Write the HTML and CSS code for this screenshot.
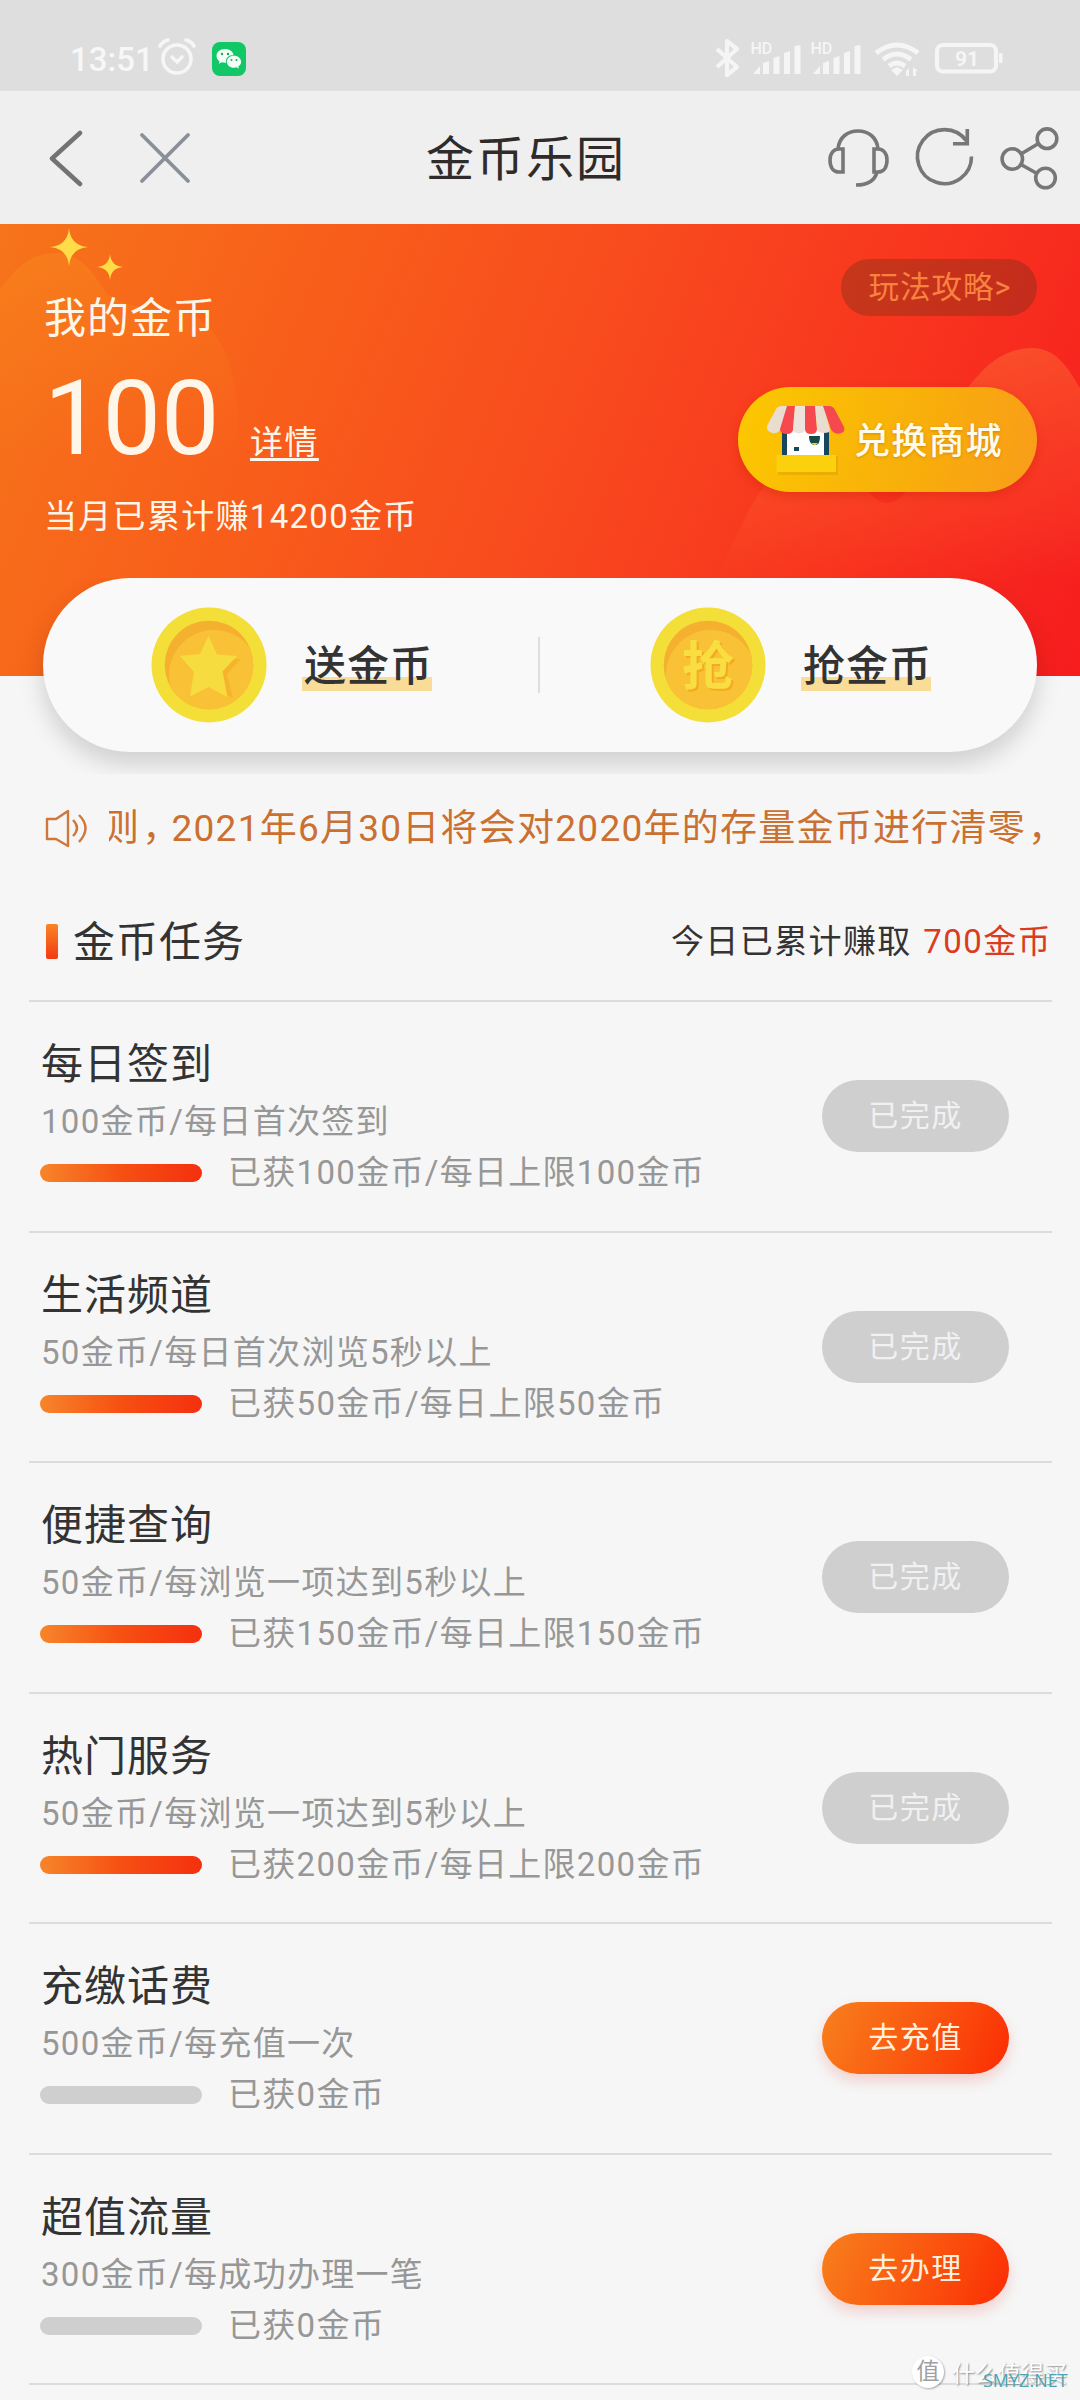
FILE: index.html
```html
<!DOCTYPE html>
<html lang="zh-CN">
<head>
<meta charset="utf-8">
<title>金币乐园</title>
<link rel="stylesheet" href="styles.css">
</head>
<body>
<div class="page">
  <div class="statusbar">
    <span class="clock">13:51</span>
    <svg class="alarm" width="40" height="40" viewBox="0 0 40 40" fill="none" stroke="#f6f6f6" stroke-width="3.6" stroke-linecap="round"><circle cx="20" cy="22" r="14"/><path d="M15 20l5 5 5-5M3 9q3-5 8-6M37 9q-3-5-8-6"/></svg>
    <svg class="wechat" width="34" height="34" viewBox="0 0 34 34"><rect width="34" height="34" rx="8" fill="#12c765"/><path fill="#f4fff8" d="M13 7c-5 0-8.500 3-8.500 7 0 2.300 1.200 4 3 5.300l-.8 2.500 3-1.500c1.500.4 2.800.5 4.300.4-.8-4.500 2.500-7.800 7.500-7.800C21 9.500 17.500 7 13 7z"/><path fill="#f4fff8" d="M22 13.700c-4.200 0-7.200 2.700-7.200 6s3 6 7.200 6c.8 0 1.700-.1 2.500-.4l2.400 1.400-.6-2.200c1.800-1.200 2.800-2.900 2.800-4.800 0-3.300-3-6-7.100-6z"/><g fill="#12a957"><circle cx="10" cy="12" r="1.200"/><circle cx="16" cy="12" r="1.200"/><circle cx="19.500" cy="18" r="1"/><circle cx="24.500" cy="18" r="1"/></g></svg>
    <svg class="signals" width="292" height="44" viewBox="714 38 292 44" fill="none" stroke="#f5f5f5" stroke-width="4.200">
      <path d="M717 50l20 18-10 8V42l10 8-20 18" stroke-linejoin="round"/>
      <g stroke="none" fill="#f5f5f5">
        <text class="hd" x="750.500" y="55">HD</text><text class="hd" x="810.500" y="55">HD</text>
        <path id="bars" d="M753 75l7-8v8zM763 64l6-2v13h-6zM773.500 59l6-2v18h-6zM784 54l6-2v23h-6zM794.500 47l6-1v29h-6z"/>
        <use href="#bars" x="60"/>
        <path d="M891 71l6-3 6 3-6 6z"/>
        <path d="M909 69v8h-3v-5zM913 77v-9l5 4h-2v5z"/>
        <rect x="999" y="54" width="3.500" height="10" rx="1"/>
        <text class="charge" x="955" y="67">91</text>
      </g>
      <path d="M876 54q21-16 42 0M883 60.500q14-11 28 0M889 67q8-6 16 0" stroke-width="5"/>
      <rect x="937" y="46" width="59" height="26.500" rx="6"/>
    </svg>
  </div>

  <header class="navbar">
    <svg class="back" width="36" height="58" viewBox="0 0 36 58" fill="none" stroke="#737373" stroke-width="4.500" stroke-linecap="round" stroke-linejoin="round"><path d="M32 4L4 29.500 32 55"/></svg>
    <svg class="close" width="52" height="52" viewBox="0 0 52 52" fill="none" stroke="#8a9098" stroke-width="3.800" stroke-linecap="round"><path d="M3 3l46 46M49 3L3 49"/></svg>
    <h1 class="title">金币乐园</h1>
    <svg class="tools" width="236" height="68" viewBox="826 123 236 68" fill="none" stroke="#777" stroke-width="3.600">
      <path d="M838 148c1-12 10-18 20-18s19 6 20 18M843 148v23h-4c-6 0-9-5-9-12s4-11 9-11zM874 148v23h4c6 0 9-5 9-12s-4-11-9-11zM877 171c-2 8-9 13-21 13"/>
      <path d="M971.500 155.500a27 27 0 1 1-5-15.500M967.300 128v14.800H953"/>
      <circle cx="1012.300" cy="158" r="10.200"/><circle cx="1047" cy="137.700" r="9.800"/><circle cx="1045.500" cy="177" r="9.800"/>
      <path d="M1021 153l17.500-10.500M1021 163.500l16 9"/>
    </svg>
  </header>

  <main>
    <section class="hero">
      <svg class="hero-art" width="1080" height="452" viewBox="0 224 1080 452">
        <defs>
          <linearGradient id="glow" x1="0" y1="0" x2="0" y2="1"><stop offset="0" stop-color="#ffb020" stop-opacity=".18"/><stop offset=".5" stop-color="#ffa020" stop-opacity="0"/></linearGradient>
          <linearGradient id="hill" x1="0" y1="0" x2="0" y2="1"><stop offset="0" stop-color="#ff9440" stop-opacity=".32"/><stop offset=".7" stop-color="#ff7838" stop-opacity=".16"/><stop offset="1" stop-color="#ff7838" stop-opacity="0"/></linearGradient>
        </defs>
        <path fill="url(#glow)" d="M0 290q24-37 54-37c26 0 38 17 52 40q20 16 60 16c45 0 72 45 72 116v249H0z"/>
        <path fill="url(#hill)" d="M716 580c25-50 50-130 105-130 34 0 42 53 66 53 42 0 64-155 145-155 28 0 40 28 48 40v192z"/>
        <g fill="#ffdc48"><path d="M69 228q1.500 17.500 19 19-17.500 1.500-19 19-1.500-17.500-19-19 17.500-1.500 19-19z"/><path d="M110 254q1 12 13 13-12 1-13 13-1-12-13-13 12-1 13-13z"/></g>
      </svg>
      <div class="balance">
        <p class="balance-label">我的金币</p>
        <p class="balance-line"><span class="balance-value">100</span><a class="detail">详情</a></p>
        <p class="balance-month">当月已累计赚14200金币</p>
      </div>
      <div class="hero-side">
        <a class="guide">玩法攻略&gt;</a>
        <a class="mall">
          <svg class="shop" width="84" height="72" viewBox="764 403 84 72">
            <path fill="#dca000" opacity=".5" d="M778 456h60v20h-60z"/>
            <path fill="#fff" d="M782 428h47v28h-47z"/><path fill="#164660" d="M782 430h5v26h-5zM824 430h5v26h-5zM794 447h5v4h-5z"/><path fill="#164b48" d="M809 436h11c0 7-2 9-5 9s-6-2-6-9z"/><path fill="#f5d020" d="M811 443h7l-3 2.500z"/>
            <path fill="#fbd00c" d="M776.600 455H836v17h-59.400z"/>
            <path fill="#e9ddd0" d="M776 409q2-3 6-3h6l-8 24q-3 4-8 3-6-2-5-7z"/>
            <path fill="#f5494f" d="M787 406h8l-2 24q-1 4-6 4-7 0-7-5z"/>
            <path fill="#eee3dc" d="M795 406h10v23q0 4-6 4.500-6-.5-6-4.500z"/>
            <path fill="#f5494f" d="M805 406h10l2 23q0 5-6 5-6 0-6-5z"/>
            <path fill="#e9ddd0" d="M815 406h9l6 24q0 3-6 3-6 0-7-4z"/>
            <path fill="#f5494f" d="M823 406h6q4 0 6 4l9 17q2 5-4 6.500-6 1-9-4z"/>
          </svg>
          <span>兑换商城</span>
        </a>
      </div>
    </section>

    <div class="actions-wrap">
      <div class="actions">
        <a class="action">
          <svg class="coin" width="116" height="116" viewBox="0 0 116 116"><defs><clipPath id="face"><circle cx="58" cy="58" r="44.300"/></clipPath></defs><circle cx="58" cy="58" r="57.500" fill="#f3df38"/><circle cx="58" cy="58" r="44.300" fill="#f5b030"/><circle cx="63" cy="68" r="45" fill="#f9c236" clip-path="url(#face)"/><path d="M76 52l14 0-14 15 6 24-9-4-15-9-16 8 14-22z" fill="#f5ae2a" opacity=".7"/><path fill="#f7dc40" d="M57.500 29l8.500 18.500 20 1.500-14.500 15.500 5 25.500-19-10-18.500 9.500 4-24.500-14-16 20-2z"/></svg>
          <span class="action-text">送金币</span>
        </a>
        <i class="split"></i>
        <a class="action">
          <svg class="coin" width="116" height="116" viewBox="0 0 116 116"><circle cx="58" cy="58" r="57.500" fill="#f3df38"/><circle cx="58" cy="58" r="44.300" fill="#f5b030"/><circle cx="61" cy="68" r="45" fill="#f9c236" clip-path="url(#face)"/><text class="coin-char coin-shade" x="34" y="80">抢</text><text class="coin-char" x="32" y="78">抢</text></svg>
          <span class="action-text">抢金币</span>
        </a>
      </div>
    </div>

    <div class="notice">
      <svg width="42" height="40" viewBox="0 0 42 40" fill="none" stroke="#d0783a" stroke-width="2.400" stroke-linejoin="round"><path d="M2 11h9L23 3v35l-12-7H2zM28 12q8 8 0 16M34 7q13 13 0 27"/></svg>
      <div class="ticker"><span class="ticker-text">则<span class="comma">，</span>2021年6月30日将会对2020年的存量金币进行清零<span class="comma">，</span></span></div>
    </div>

    <section class="tasks">
      <div class="tasks-head">
        <h2>金币任务</h2>
        <p>今日已累计赚取 <em>700金币</em></p>
      </div>
      <article class="task"><div class="info"><h3>每日签到</h3><p>100金币/每日首次签到</p><div class="progress"><i class="bar full"></i><span>已获100金币/每日上限100金币</span></div></div><a class="btn">已完成</a></article>
      <article class="task"><div class="info"><h3>生活频道</h3><p>50金币/每日首次浏览5秒以上</p><div class="progress"><i class="bar full"></i><span>已获50金币/每日上限50金币</span></div></div><a class="btn">已完成</a></article>
      <article class="task"><div class="info"><h3>便捷查询</h3><p>50金币/每浏览一项达到5秒以上</p><div class="progress"><i class="bar full"></i><span>已获150金币/每日上限150金币</span></div></div><a class="btn">已完成</a></article>
      <article class="task"><div class="info"><h3>热门服务</h3><p>50金币/每浏览一项达到5秒以上</p><div class="progress"><i class="bar full"></i><span>已获200金币/每日上限200金币</span></div></div><a class="btn">已完成</a></article>
      <article class="task"><div class="info"><h3>充缴话费</h3><p>500金币/每充值一次</p><div class="progress"><i class="bar"></i><span>已获0金币</span></div></div><a class="btn go">去充值</a></article>
      <article class="task"><div class="info"><h3>超值流量</h3><p>300金币/每成功办理一笔</p><div class="progress"><i class="bar"></i><span>已获0金币</span></div></div><a class="btn go">去办理</a></article>
      <div class="tasks-end"></div>
    </section>
  </main>

  <div class="watermark"><span class="mark-logo">值</span><span class="mark-name">什么值得买</span></div>
  <div class="site">SMYZ.NET</div>
</div>
</body>
</html>
```
FILE: styles.css
```css
* { box-sizing: border-box; margin: 0; padding: 0; }
body {
  background: #f6f6f6;
  color: #333;
  font-family: Roboto, "Noto Sans CJK SC", sans-serif;
}
i, em { font-style: normal; }
svg { display: block; flex: none; }
h1, h2, h3 { font-weight: 400; }

.page { position: relative; width: 1080px; height: 2400px; overflow: hidden; }

/* system status bar */
.statusbar {
  display: flex;
  align-items: center;
  height: 91px;
  padding: 27px 74px 0 70px;
  background: #dedede;
  color: #f7f7f7;
}
.clock { width: 87px; padding-top: 2px; font-size: 33px; font-weight: 500; line-height: 40px; }
.alarm { margin-top: -4px; }
.wechat { margin-left: 15px; }
.signals { margin-left: auto; }
.hd { font: 500 16px Roboto, sans-serif; }
.charge { font: 700 21px Roboto, sans-serif; }

/* navigation */
.navbar {
  display: flex;
  align-items: center;
  height: 133px;
  padding: 0 18px 0 48px;
  background: #efefef;
}
.close { margin-left: 55px; }
.title {
  margin-left: 235px;
  padding-top: 4px;
  font-size: 48px;
  line-height: 60px;
  letter-spacing: 2px;
  color: #2f2b2b;
}
.tools { margin-left: auto; }

/* balance banner */
.hero {
  position: relative;
  display: flex;
  justify-content: space-between;
  height: 452px;
  padding: 0 43px 0 44px;
  background: linear-gradient(112deg, #f6741a 0%, #f8601a 25%, #f84a1e 52%, #f8321e 78%, #f61c1e 100%);
  color: #fff6ea;
}
.hero-art { position: absolute; left: 0; top: 0; }
.balance, .hero-side { position: relative; }
.balance { padding-top: 69px; }
.balance-label { font-size: 42px; line-height: 52px; letter-spacing: 1px; }
.balance-line { display: flex; align-items: baseline; height: 133px; }
.balance-value { width: 206px; font-size: 104px; line-height: 148px; }
.detail {
  font-size: 33px;
  letter-spacing: 1.400px;
  text-decoration: underline;
  text-decoration-thickness: 3px;
  text-underline-offset: 4px;
}
.balance-month { padding-top: 19px; font-size: 33px; line-height: 40px; letter-spacing: 1.300px; }
.hero-side { display: flex; flex-direction: column; align-items: flex-end; padding-top: 35px; }
.guide {
  width: 196px;
  height: 57px;
  padding-left: 2px;
  border-radius: 29px;
  background: rgba(80, 48, 24, .3);
  color: #f9823f;
  font-size: 30.500px;
  line-height: 58px;
  letter-spacing: 1px;
  text-align: center;
}
.mall {
  display: flex;
  align-items: center;
  width: 299px;
  height: 105px;
  margin-top: 71px;
  padding-left: 26px;
  border-radius: 53px;
  background: linear-gradient(105deg, #fcc800, #f8ac0c 65%, #f99c1a);
  box-shadow: 0 4px 10px rgba(190, 30, 0, .3);
  color: #fffbea;
  font-size: 36px;
  font-weight: 500;
  letter-spacing: 1.200px;
  text-shadow: 0 1px 3px rgba(160, 90, 0, .4);
}
.mall svg { margin-top: -2px; }
.mall span { margin: -4px 0 0 6px; }

/* floating action pill */
.actions-wrap {
  position: relative;
  height: 196px;
  margin-top: -98px;
  padding: 0 43px;
  overflow: hidden;
}
.actions {
  display: flex;
  align-items: center;
  height: 174px;
  padding: 0 0 0 108px;
  border-radius: 87px;
  background: #f9f9f9;
  box-shadow: 0 12px 24px rgba(0, 0, 0, .16);
}
.action { display: flex; align-items: center; }
.action-text {
  width: 130px;
  margin-left: 35px;
  padding: 3px 0 0 2px;
  background: linear-gradient(#f8dc98, #f8dc98) 0 100% / 100% 14px no-repeat;
  font-size: 42px;
  font-weight: 500;
  line-height: 49px;
  letter-spacing: 1px;
  white-space: nowrap;
}
.split { width: 2px; height: 56px; margin: 0 110px 0 106px; background: #dedede; }
.coin-char { font: 700 52px "Noto Sans CJK SC", sans-serif; fill: #f8de40; }
.coin-char.coin-shade { fill: #f5aa22; }

/* notice */
.notice { display: flex; align-items: center; height: 108px; padding: 0 36px 0 45px; color: #ca7030; }
.ticker { display: flex; width: 955px; margin-left: 22px; padding-top: 2px; overflow: hidden; }
.ticker-text { margin-left: -7px; font-size: 37px; line-height: 50px; letter-spacing: 1.250px; white-space: nowrap; }
.comma { margin-left: 2px; margin-right: -9px; }

/* task list */
.tasks { padding: 0 28px 0 29px; }
.tasks-head {
  display: flex;
  align-items: center;
  justify-content: space-between;
  height: 118px;
  padding: 0 0 0 17px;
}
.tasks-head h2 { display: flex; align-items: center; padding-top: 3px; font-size: 42px; line-height: 52px; letter-spacing: 1px; }
.tasks-head h2::before {
  content: "";
  width: 12px;
  height: 35px;
  margin: -3px 15px 0 0;
  border-radius: 2px;
  background: linear-gradient(#f98526, #f33a12);
}
.tasks-head p { padding-top: 1px; font-size: 33px; line-height: 40px; letter-spacing: 1.400px; white-space: nowrap; }
.tasks-head em { margin-left: 2px; color: #da3c1e; }
.task {
  display: flex;
  justify-content: space-between;
  height: 230.500px;
  padding: 0 43px 0 11px;
  border-top: 2px solid #dcdcdc;
}
.task h3 { padding: 37px 0 0 1px; font-size: 42px; line-height: 52px; letter-spacing: 1px; }
.task p { padding: 11px 0 0 1px; }
.task p, .progress { color: #979797; font-size: 33px; line-height: 40px; letter-spacing: 1.300px; }
.progress { display: flex; align-items: center; padding-top: 11px; }
.bar { width: 162px; height: 18px; margin-right: 26px; border-radius: 9px; background: #cfcfcf; }
.bar.full { background: linear-gradient(90deg, #f7852a, #f65012 50%, #f4300f); }
.btn {
  width: 187px;
  height: 72px;
  margin-top: 78px;
  border-radius: 36px;
  background: #cfcfcf;
  color: #f1f1f1;
  font-size: 30px;
  line-height: 71px;
  letter-spacing: 1.500px;
  text-align: center;
}
.btn.go {
  background: linear-gradient(115deg, #f8801c, #fa5810 50%, #fb2c04);
  color: #fff1dc;
  box-shadow: 0 7px 14px rgba(220, 60, 50, .2);
}
.tasks-end { border-top: 2px solid #dcdcdc; }

/* overlaid marks */
.watermark { position: absolute; left: 912px; top: 2355px; display: flex; align-items: center; gap: 8px; }
.mark-logo {
  width: 32px;
  height: 32px;
  border-radius: 50%;
  background: #fff;
  box-shadow: 1px 1px 2px rgba(0, 0, 0, .3);
  color: #a0a0a0;
  font-size: 23px;
  line-height: 31px;
  text-align: center;
}
.mark-name { color: #fff; font-size: 23px; text-shadow: 1px 1px 2px rgba(0, 0, 0, .45); }
.site { position: absolute; left: 983px; top: 2369px; color: #4aa4b4; font: 500 18px/23px "Open Sans", sans-serif; }
```
